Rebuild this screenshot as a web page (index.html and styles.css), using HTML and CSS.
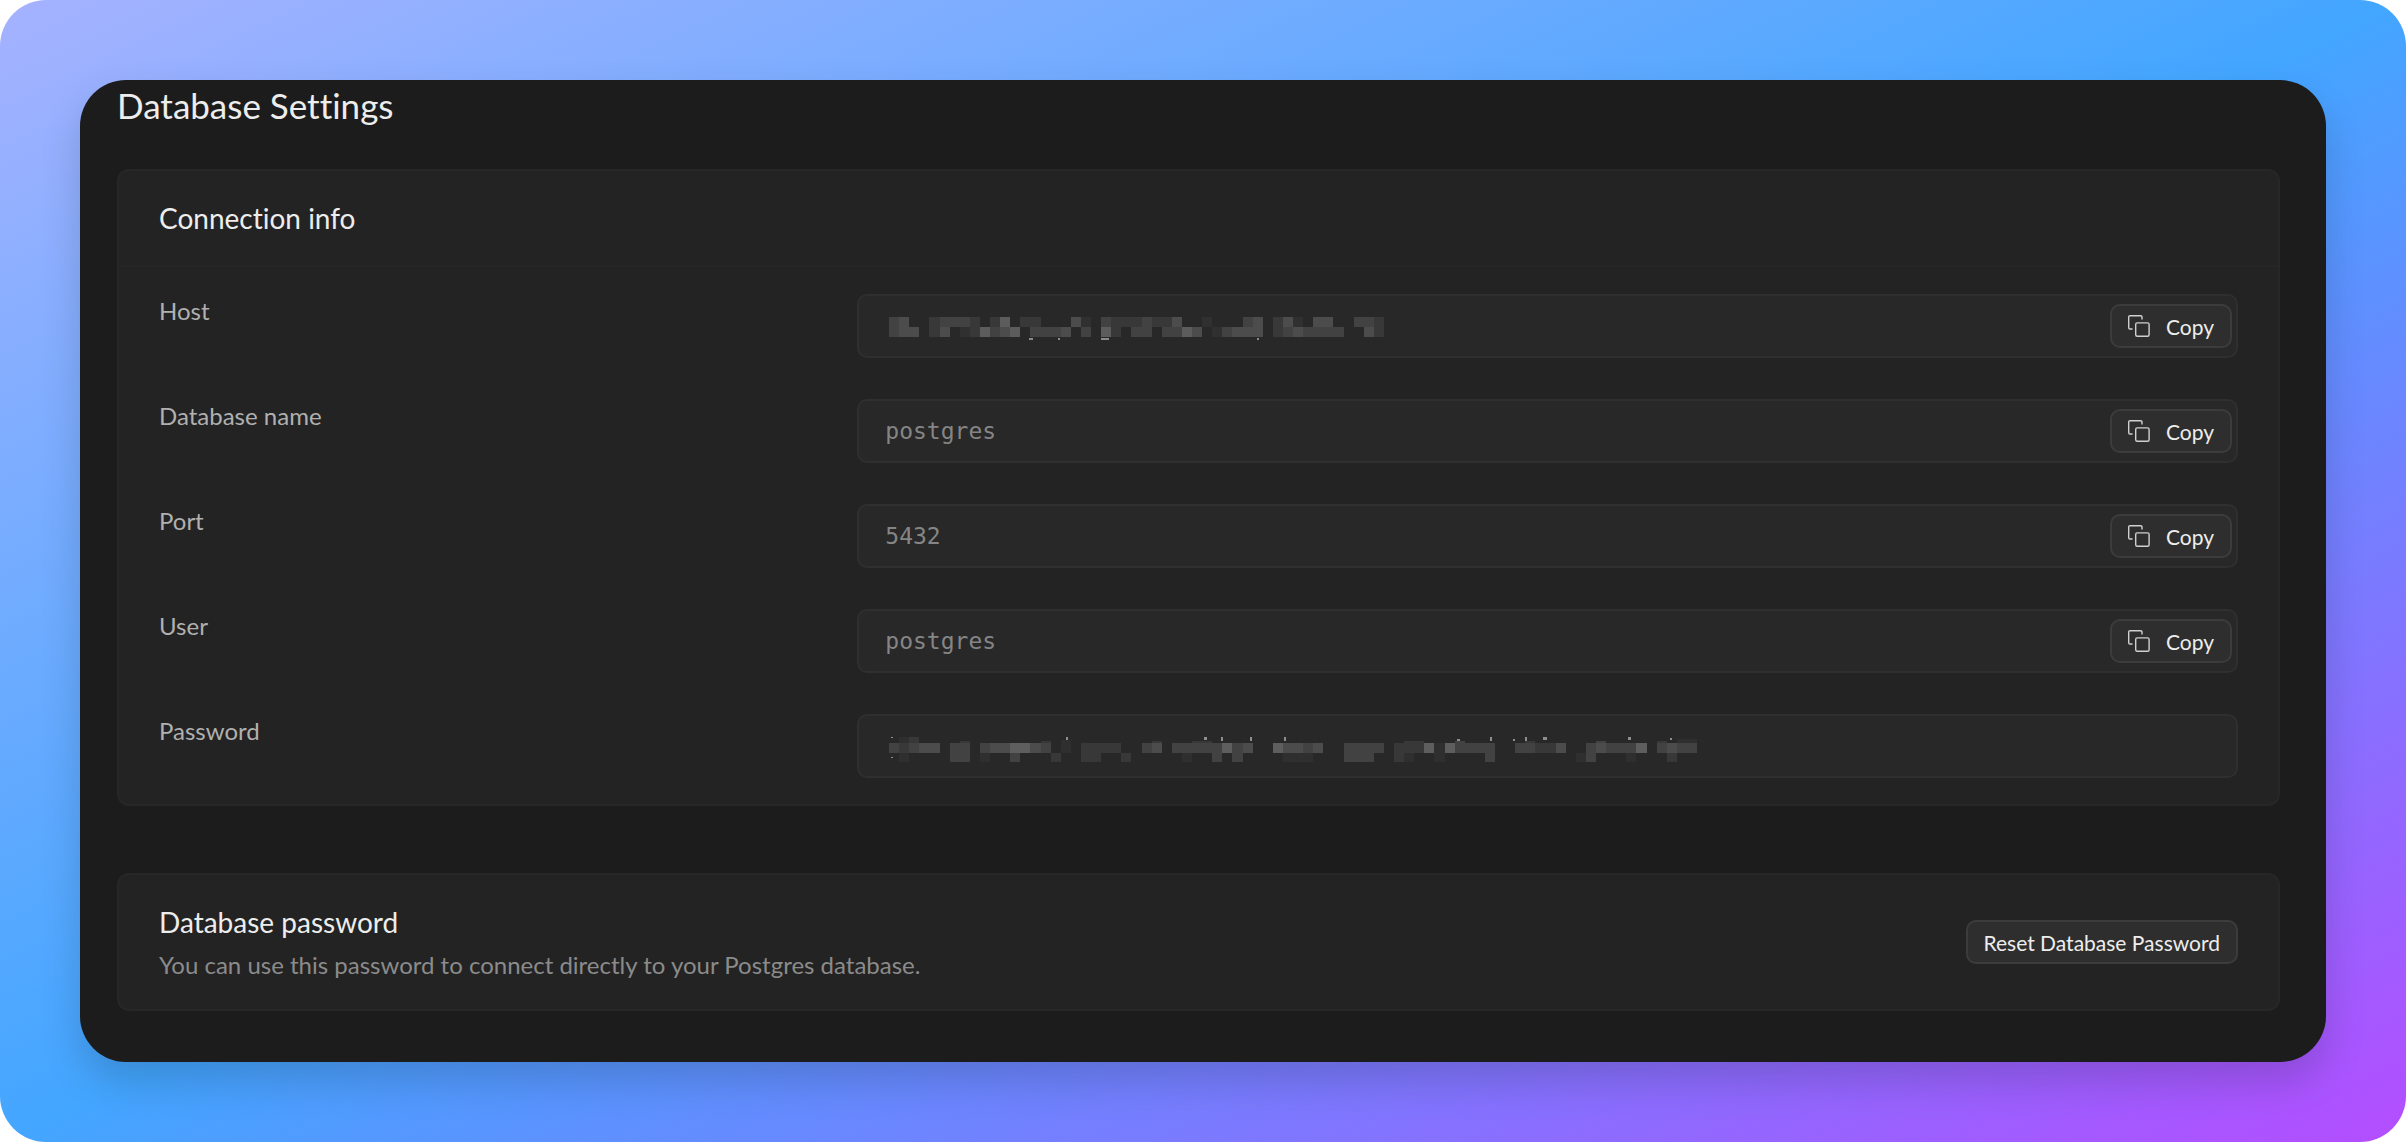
FILE: index.html
```html
<!DOCTYPE html>
<html lang="en">
<head>
    <meta charset="UTF-8">
    <meta name="viewport" content="width=device-width, initial-scale=1.0">
    <title>Database Settings</title>
    <link rel="stylesheet" href="styles.css">
</head>
<body>
    <svg class="sprite" aria-hidden="true">
        <symbol id="icon-copy" viewBox="0 0 22 22">
            <path d="M14 4.5V2a1.3 1.3 0 0 0-1.3-1.3H2A1.3 1.3 0 0 0 .7 2v10.7A1.3 1.3 0 0 0 2 14h2.5"/>
            <rect x="7.7" y="7.9" width="13.4" height="13.4" rx="1.5"/>
        </symbol>
    </svg>

    <div class="backdrop">
        <main class="panel">
            <h1>Database Settings</h1>

            <section class="card">
                <div class="card-header">
                    <h2>Connection info</h2>
                </div>
                <div class="card-body">
                    <div class="row">
                        <label for="host">Host</label>
                        <div class="field">
                            <input type="text" id="host" readonly>
                            <!-- masked host -->
                            <svg class="mask" width="495" height="24" viewBox="0 0 49 24" preserveAspectRatio="none" shape-rendering="crispEdges">
                                <path fill="#303030" d="M5 10h1v10h-1zM7 10h2v10h-2zM19 0h1v10h-1zM31 0h1v10h-1zM40 0h1v10h-1zM32 10h1v10h-1z"/>
                                <path fill="#383838" d="M4 0h1v20h-1zM8 0h1v10h-1zM10 0h1v10h-1zM13 0h2v10h-2zM8 10h1v10h-1zM22 0h3v10h-3zM22 10h1v10h-1zM26 0h2v10h-2zM38 0h1v10h-1zM38 10h1v10h-1zM48 0h1v20h-1z"/>
                                <path fill="#424242" d="M0 0h1v20h-1zM5 0h3v10h-3zM10 10h1v10h-1zM14 10h3v10h-3zM19 10h1v10h-1zM21 0h1v10h-1zM24 10h2v10h-2zM27 10h2v10h-2zM33 10h1v10h-1zM35 0h1v10h-1zM39 10h1v10h-1zM41 10h4v10h-4zM46 0h2v10h-2zM25 0h1v10h-1z"/>
                                <path fill="#4c4c4c" d="M1 0h1v10h-1zM1 10h2v10h-2zM5 10h1v10h-1zM11 10h1v10h-1zM17 10h1v10h-1zM18 0h1v10h-1zM28 0h1v10h-1zM30 10h1v10h-1zM34 10h3v10h-3zM36 0h1v10h-1zM39 0h1v10h-1zM42 0h2v10h-2zM47 10h1v10h-1zM40 10h1v10h-1z"/>
                                <path fill="#5c5c5c" d="M9 10h1v10h-1zM11 0h1v10h-1zM12 10h1v10h-1zM21 10h1v10h-1zM29 10h1v10h-1z"/>
                                <path fill="#8a8a8a" d="M13.9 21h.4v2h-.4zM16.7 21h.2v2h-.2zM21 21h.8v2h-.8zM36.4 21h.2v2h-.2z"/>
                            </svg>
                            <button type="button" class="btn">
                                <svg class="icon" aria-hidden="true"><use href="#icon-copy"/></svg>
                                Copy
                            </button>
                        </div>
                    </div>

                    <div class="row">
                        <label for="dbname">Database name</label>
                        <div class="field">
                            <input type="text" id="dbname" value="postgres" readonly>
                            <button type="button" class="btn">
                                <svg class="icon" aria-hidden="true"><use href="#icon-copy"/></svg>
                                Copy
                            </button>
                        </div>
                    </div>

                    <div class="row">
                        <label for="port">Port</label>
                        <div class="field">
                            <input type="text" id="port" value="5432" readonly>
                            <button type="button" class="btn">
                                <svg class="icon" aria-hidden="true"><use href="#icon-copy"/></svg>
                                Copy
                            </button>
                        </div>
                    </div>

                    <div class="row">
                        <label for="user">User</label>
                        <div class="field">
                            <input type="text" id="user" value="postgres" readonly>
                            <button type="button" class="btn">
                                <svg class="icon" aria-hidden="true"><use href="#icon-copy"/></svg>
                                Copy
                            </button>
                        </div>
                    </div>

                    <div class="row">
                        <label for="password">Password</label>
                        <div class="field">
                            <input type="text" id="password" readonly>
                            <!-- masked password -->
                            <svg class="mask" width="808" height="26" viewBox="0 0 80 26" preserveAspectRatio="none" shape-rendering="crispEdges">
                                <path fill="#2f2f2f" d="M1 0h1v6h-1zM1 16h1v9h-1zM9 16h1v9h-1zM29 16h1v9h-1zM39 16h3v9h-3zM54 6h1v19h-1zM51 16h1v9h-1zM68 16h1v9h-1zM73 16h1v9h-1zM78 2h2v4h-2zM17 3h1v13h-1z"/>
                                <path fill="#383838" d="M2 0h1v6h-1zM1 6h1v10h-1zM7 4h1v2h-1zM15 4h1v2h-1zM19 6h4v10h-4zM19 16h2v9h-2zM16 16h1v9h-1zM23 16h1v9h-1zM26 4h1v2h-1zM30 4h2v2h-2zM50 6h1v19h-1zM51 4h2v12h-2zM63 4h1v2h-1zM64 6h2v10h-2zM77 16h1v9h-1zM76 4h1v2h-1z"/>
                                <path fill="#424242" d="M0 6h1v10h-1zM2 6h1v10h-1zM6 6h2v19h-2zM9 6h3v10h-3zM15 6h1v10h-1zM12 16h1v9h-1zM25 6h1v10h-1zM28 6h5v10h-5zM32 16h1v9h-1zM34 16h1v9h-1zM34 6h1v10h-1zM41 6h1v10h-1zM45 6h4v10h-4zM45 16h3v9h-3zM56 6h4v10h-4zM59 16h1v9h-1zM56 4h1v2h-1zM62 6h2v10h-2zM69 6h5v10h-5zM69 16h1v9h-1zM70 4h1v2h-1zM76 6h4v10h-4z"/>
                                <path fill="#4c4c4c" d="M3 6h2v10h-2zM10 6h2v10h-2zM14 6h1v10h-1zM26 6h1v10h-1zM35 6h1v10h-1zM39 6h2v10h-2zM42 6h1v10h-1zM66 6h1v10h-1zM70 6h1v10h-1zM77 6h1v10h-1z"/>
                                <path fill="#5e5e5e" d="M12 6h2v10h-2zM33 6h1v10h-1zM38 6h1v10h-1zM53 6h1v10h-1zM55 6h1v10h-1zM74 6h1v10h-1z"/>
                                <path fill="#8e8e8e" d="M.2 0h.2v1h-.2zM.2 20h.2v1h-.2zM17.5 0h.2v3h-.2zM31.2 0h.3v3h-.3zM32.9 0h.2v4h-.2zM35.7 0h.2v4h-.2zM39.1 0h.2v4h-.2zM56.2 2h.3v2h-.3zM59.5 0h.2v4h-.2zM61.8 2h.2v2h-.2zM63 0h.2v4h-.2zM64.8 0h.3v3h-.3zM73.2 0h.3v3h-.3zM77.3 1h.2v2h-.2z"/>
                            </svg>
                        </div>
                    </div>
                </div>
            </section>

            <section class="card card-inline">
                <div>
                    <h2>Database password</h2>
                    <p>You can use this password to connect directly to your Postgres database.</p>
                </div>
                <button type="button" class="btn">Reset Database Password</button>
            </section>
        </main>
    </div>
</body>
</html>
```
FILE: styles.css
```css
* {
    margin: 0;
    padding: 0;
    box-sizing: border-box;
}

body {
    font-family: 'Lato', sans-serif;
    font-variant-ligatures: none;
    background: #fff;
    color: #ededed;
}

.sprite {
    display: none;
}

.backdrop {
    min-height: 100vh;
    padding: 80px;
    border-radius: 46px;
    background: linear-gradient(to bottom right, #a5b2ff 0%, #43a6ff 50%, #b44dff 100%);
}

.panel {
    padding: 0 46px 51px 37px;
    border-radius: 46px;
    background: #1c1c1c;
    box-shadow: 0 20px 40px rgba(0, 0, 0, 0.16);
}

h1 {
    margin-bottom: 39px;
    font-size: 35px;
    font-weight: 400;
    line-height: 50px;
}

h2 {
    font-size: 28px;
    font-weight: 400;
    line-height: 38px;
}

.card {
    border: 2px solid #272727;
    border-radius: 12px;
    background: #232323;
}

.card-header {
    padding: 28px 40px;
    border-bottom: 2px solid #262626;
}

.card-body {
    display: grid;
    gap: 41px;
    padding: 27px 40px 26px;
}

.row {
    display: grid;
    grid-template-columns: 1fr 2fr;
    gap: 8px;
}

label {
    color: #b0b0b0;
    font-size: 24px;
    line-height: 34px;
}

.field {
    position: relative;
    display: flex;
    align-items: center;
    height: 64px;
    padding-right: 4px;
    border: 2px solid #2f2f2f;
    border-radius: 10px;
    background: #282828;
}

.field input {
    flex: 1;
    min-width: 0;
    padding: 0 26px;
    border: none;
    outline: none;
    background: transparent;
    color: #858585;
    font-family: 'DejaVu Sans Mono', monospace;
    font-size: 23px;
    line-height: 32px;
}

.mask {
    position: absolute;
    left: 30px;
    top: 21px;
}

.btn {
    display: flex;
    align-items: center;
    gap: 16px;
    height: 44px;
    padding: 0 16px;
    border: 2px solid #3c3c3c;
    border-radius: 10px;
    background: #2e2e2e;
    color: #ededed;
    font-family: inherit;
    font-size: 21px;
    cursor: pointer;
}

.icon {
    width: 22px;
    height: 22px;
    fill: none;
    stroke: #d0d0d0;
    stroke-width: 1.4;
}

.card-inline {
    display: flex;
    align-items: center;
    justify-content: space-between;
    margin-top: 67px;
    padding: 28px 40px;
}

.card-inline p {
    margin-top: 8px;
    color: #8b8b8b;
    font-size: 24px;
    line-height: 32px;
}
```
